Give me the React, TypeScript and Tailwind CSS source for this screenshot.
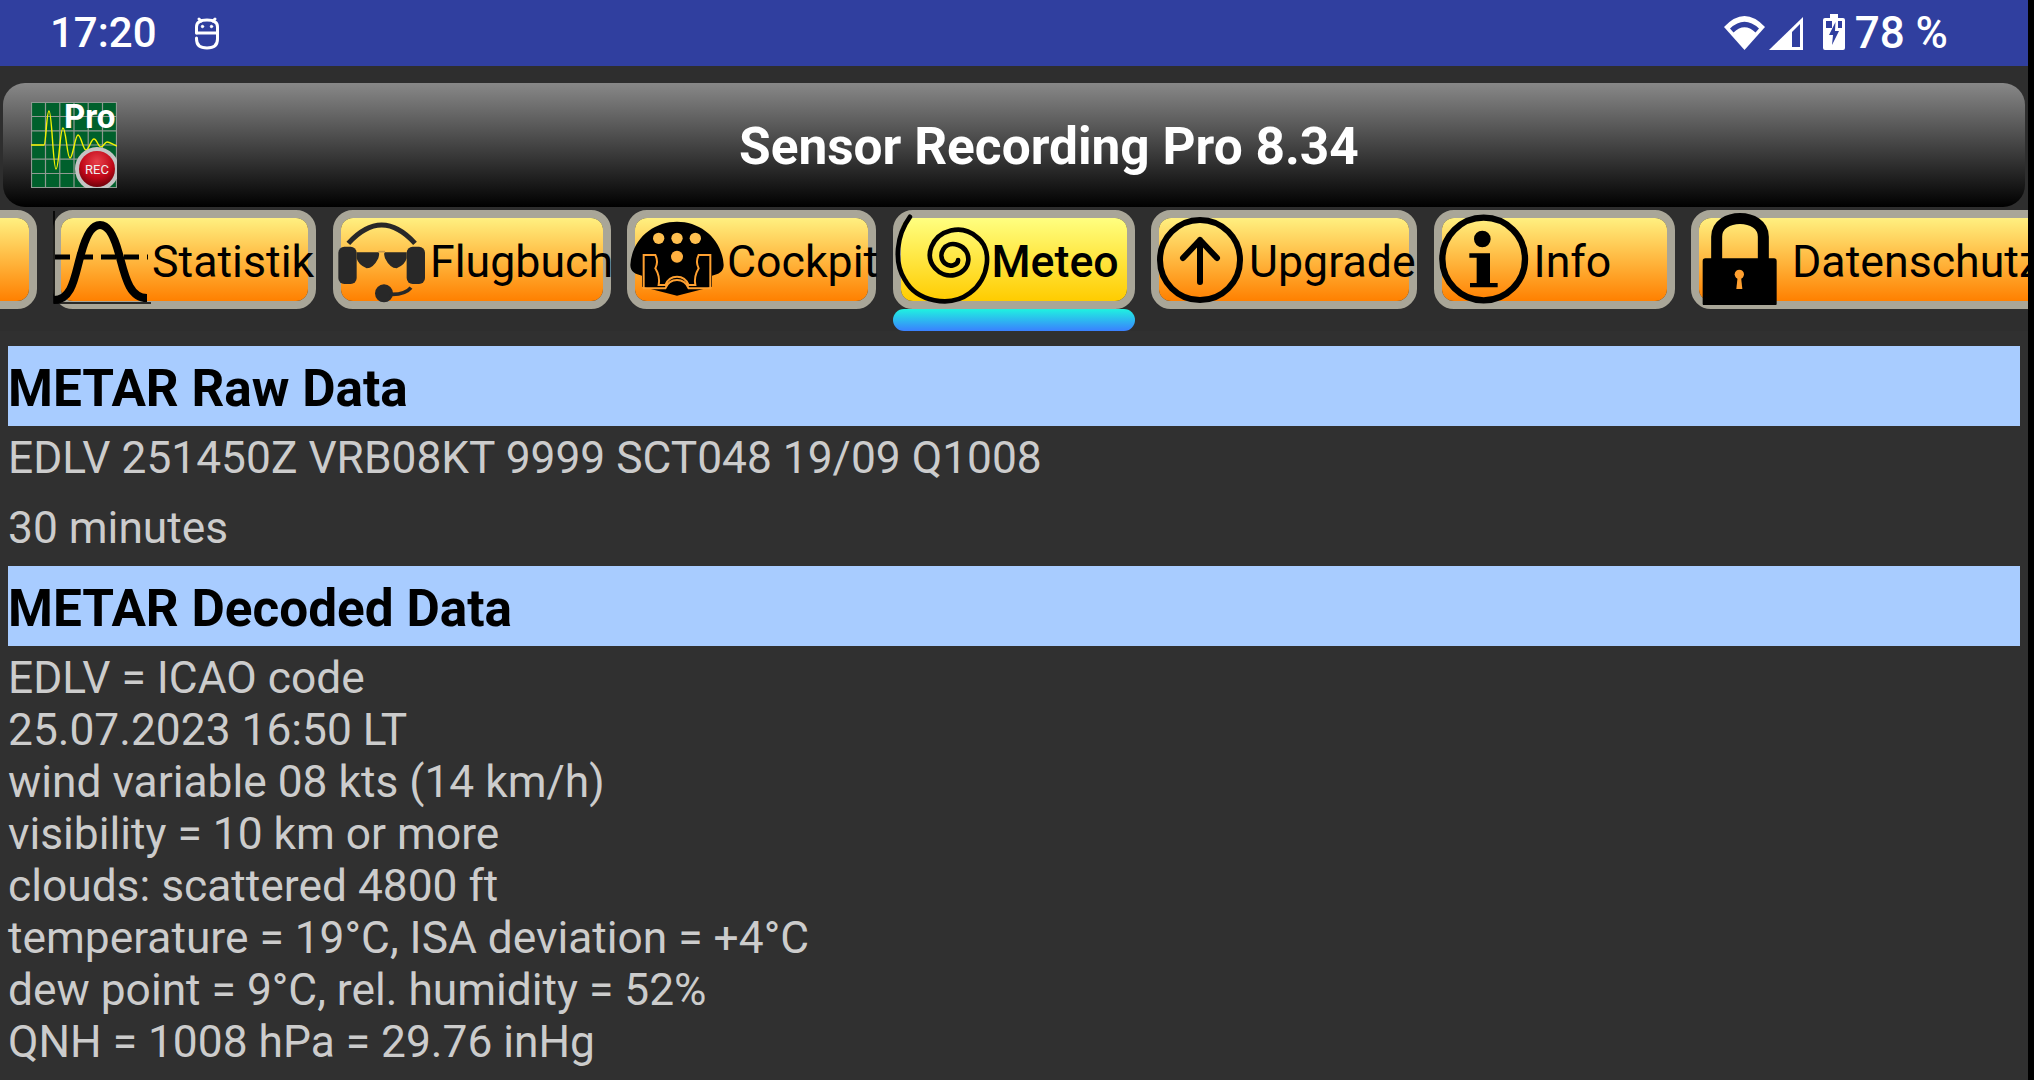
import React from "react";

const StatusIcons = () => (
  <>
    <svg width="41" height="34" viewBox="0 0 41 34" className="shrink-0">
      <path d="M0 11Q20.5-11 41 11L20.5 34Z" fill="#fff" />
      <path d="M6 12.5Q20.5-1 35 12.5L31.5 16.5Q20.5 6 9.5 16.5Z" fill="#303f9f" />
    </svg>
    <svg width="34" height="33" viewBox="0 0 34 33" className="shrink-0 ml-[4px] mt-[1px]">
      <path d="M0 33L34 0V33Z" fill="#fff" />
      <path d="M23 30H31V7L23 15Z" fill="#303f9f" />
    </svg>
    <svg width="22" height="36" viewBox="0 0 22 36" className="shrink-0 ml-[20px] -mt-[2px]">
      <path d="M7 0H15V4H20Q22 4 22 6V34Q22 36 20 36H2Q0 36 0 34V6Q0 4 2 4H7Z" fill="#fff" />
      <path d="M3 7H9V14H3ZM15 7H19V14H15Z" fill="#303f9f" />
      <path d="M12.5 8L6 21H10L9 31L16 17H12Z" fill="#303f9f" />
    </svg>
  </>
);

const RobotIcon = () => (
  <svg width="26" height="34" viewBox="0 0 26 34" className="shrink-0" fill="none" stroke="#fff" strokeWidth="3" strokeLinecap="round">
    <path d="M5 3L7 5M21 3L19 5" />
    <path d="M2.5 17V11Q2.5 4 13 4Q23.5 4 23.5 11V23Q23.5 32 13 32Q2.5 32 2.5 23V22" />
    <path d="M3 17H23" />
    <circle cx="8.5" cy="10.5" r="1.2" fill="#fff" strokeWidth="1" />
    <circle cx="17.5" cy="10.5" r="1.2" fill="#fff" strokeWidth="1" />
  </svg>
);

const Logo = () => (
  <svg width="86" height="86" viewBox="0 0 86 86" className="shrink-0">
    <defs>
      <radialGradient id="recRed" cx="50%" cy="30%" r="75%">
        <stop offset="0%" stopColor="#e8404a" />
        <stop offset="60%" stopColor="#c00818" />
        <stop offset="100%" stopColor="#600008" />
      </radialGradient>
      <clipPath id="logoClip">
        <rect width="86" height="86" />
      </clipPath>
    </defs>
    <g clipPath="url(#logoClip)">
      <rect width="86" height="86" fill="#00602c" />
      <path d="M.5 0V86M14.5 0V86M28.8 0V86M43 0V86M57.2 0V86M71.5 0V86M85.5 0V86M0 .5H86M0 14.5H86M0 28.8H86M0 43H86M0 57.2H86M0 71.5H86M0 85.5H86" stroke="#8f9a92" strokeWidth="1.2" fill="none" />
      <path d="M0 43H13C15 43 15.5 9 18 9C21 9 22 67 25 67C28 67 29 26 32 26C35 26 36 56 39 56C42 56 44 33 47 33C50 33 52 48 55 48C58 48 60 37 63 37C66 37 67 45 70 45C72 45 74 40 76 40C79 40 81 42 86 44" stroke="#f4f400" strokeWidth="1.4" fill="none" />
      <text x="33" y="26" fontFamily="Roboto, sans-serif" fontWeight="700" fontSize="33" fill="#fff">Pro</text>
      <circle cx="66" cy="67" r="22" fill="#c4c4c4" />
      <circle cx="66" cy="67" r="18" fill="url(#recRed)" />
      <text x="66" y="72" textAnchor="middle" fontFamily="Roboto, sans-serif" fontWeight="400" fontSize="13" fill="#f0f0f0">REC</text>
    </g>
  </svg>
);

const StatIcon = () => (
  <svg width="100" height="100" viewBox="0 0 100 100" className="shrink-0 -ml-[10px] -mt-[9px]" fill="none" stroke="#000">
    <path d="M3 6V98H100" strokeWidth="1.6" />
    <path d="M4 52H97" strokeWidth="5" strokeDasharray="15 8" />
    <path d="M3 95C22 95 24 69 30 49C36 27 42 20 49 20C56 20 62 27 68 49C74 71 78 93 96 93" strokeWidth="8" />
  </svg>
);

const HeadsetIcon = () => (
  <svg width="100" height="100" viewBox="0 0 300 300" className="shrink-0 -ml-[10.5px] -mt-[9px]">
    <path d="M55 115Q155 5 255 115" fill="none" stroke="#282828" strokeWidth="15" />
    <rect x="25" y="125" width="55" height="112" rx="18" fill="#282828" />
    <rect x="230" y="125" width="55" height="112" rx="18" fill="#282828" />
    <path d="M80 142H145Q150 142 145 160Q130 190 110 190Q85 180 80 160ZM230 142H165Q160 142 165 160Q180 190 200 190Q225 180 230 160Z" fill="#282828" />
    <path d="M145 140H165" stroke="#c89848" strokeWidth="5" />
    <circle cx="162" cy="265" r="27" fill="#282828" />
    <path d="M180 268Q225 270 243 248" fill="none" stroke="#282828" strokeWidth="11" />
  </svg>
);

const CockpitIcon = () => (
  <svg width="94" height="100" viewBox="0 0 280 300" className="shrink-0 -ml-[5px] -mt-[9px]">
    <path d="M0 180C5 100 70 50 140 50C210 50 275 100 280 180C280 200 265 208 245 212V245L140 272L35 245V212C15 208 0 200 0 180Z" fill="#000" />
    <circle cx="85" cy="100" r="17" fill="#ffc050" />
    <circle cx="140" cy="100" r="17" fill="#ffc050" />
    <circle cx="195" cy="100" r="17" fill="#ffc050" />
    <circle cx="140" cy="155" r="18" fill="#ffb040" />
    <path d="M40 150H75Q85 170 75 190Q90 215 85 240H105Q115 215 140 215Q165 215 175 240H195Q190 215 205 190Q195 170 205 150H240V250H175Q165 225 140 225Q115 225 105 250H40Z" fill="none" stroke="#ffa030" strokeWidth="6" />
  </svg>
);

const SpiralIcon = () => (
  <svg width="113" height="100" viewBox="0 0 340 300" className="shrink-0 -ml-[21px] -mt-[9px]">
    <path d="M90 35C50 90 40 170 75 225C110 290 210 310 270 265C330 220 340 130 290 95C245 55 175 75 155 125C135 175 180 220 225 210C275 200 280 135 235 120C195 105 170 150 195 175C210 188 235 180 235 165" fill="none" stroke="#000" strokeWidth="14" strokeLinecap="round" />
  </svg>
);

const UpgradeIcon = () => (
  <svg width="90" height="90" viewBox="0 0 90 90" className="shrink-0 -ml-[4px]" fill="none" stroke="#000">
    <circle cx="45" cy="45" r="40" strokeWidth="6" />
    <path d="M45 25V67M28 43L45 25L62 43" strokeWidth="6" strokeLinecap="round" strokeLinejoin="round" />
  </svg>
);

const InfoIcon = () => (
  <svg width="100" height="100" viewBox="0 0 300 300" className="shrink-0 -ml-[12px] -mt-[9px]">
    <ellipse cx="161" cy="162" rx="124" ry="124" fill="none" stroke="#000" strokeWidth="19" />
    <circle cx="157" cy="102" r="25" fill="#000" />
    <path d="M118 145H180V234H203V247H120V234H140V158H118Z" fill="#000" />
  </svg>
);

const LockIcon = () => (
  <svg width="100" height="100" viewBox="0 0 300 300" className="shrink-0 -ml-[4px] -mt-[9px]">
    <path d="M65 170V95C65 22 205 22 205 95V170" fill="none" stroke="#000" strokeWidth="33" />
    <rect x="23" y="160" width="222" height="143" rx="8" fill="#000" />
    <circle cx="133" cy="208" r="14" fill="#ffa030" />
    <path d="M128 215H138L142 252H124Z" fill="#ffa030" />
  </svg>
);

type Tab = { label: string; w: string; gapClass: string; icon?: React.ReactNode; active?: boolean };

const tabs: Tab[] = [
  { label: "", w: "w-[200px]", gapClass: "" },
  { label: "Statistik", w: "w-[263px]", gapClass: "ml-[1px]", icon: <StatIcon /> },
  { label: "Flugbuch", w: "w-[278px]", gapClass: "ml-[0px]", icon: <HeadsetIcon /> },
  { label: "Cockpit", w: "w-[249px]", gapClass: "ml-[3px]", icon: <CockpitIcon /> },
  { label: "Meteo", w: "w-[242px]", gapClass: "-ml-[1px]", icon: <SpiralIcon />, active: true },
  { label: "Upgrade", w: "w-[266px]", gapClass: "ml-[4px]", icon: <UpgradeIcon /> },
  { label: "Info", w: "w-[241px]", gapClass: "ml-[4px]", icon: <InfoIcon /> },
  { label: "Datenschutz", w: "w-[360px]", gapClass: "-ml-[3px]", icon: <LockIcon /> },
];

const TabButton = ({ t }: { t: Tab }) => (
  <div className={`${t.w} shrink-0 flex flex-col`}>
    <div className="h-[99px] rounded-[20px] border-[8px] border-[#a9a698] overflow-visible">
      <div
        className={`h-full flex items-center rounded-[12px] bg-linear-to-b/srgb ${
          t.active ? "from-[#ffff80] to-[#ffcc00]" : "from-[#fff080] to-[#ff8000]"
        }`}
      >
        {t.icon}
        <span className={`${t.gapClass} mt-[5px] whitespace-nowrap text-[44.7px] leading-none text-black ${t.active ? "font-medium" : "font-normal"}`}>
          {t.label}
        </span>
      </div>
    </div>
    {t.active && <div className="h-[22px] rounded-[11px] bg-linear-to-b/srgb from-[#1ff2e0] to-[#3a80ff]" />}
  </div>
);

const Heading = ({ children }: { children: React.ReactNode }) => (
  <div className="h-[80px] flex items-center pt-[5px] bg-[#a8ccff] text-black font-bold text-[51.3px] leading-none">{children}</div>
);

const decoded = [
  "EDLV = ICAO code",
  "25.07.2023 16:50 LT",
  "wind variable 08 kts (14 km/h)",
  "visibility = 10 km or more",
  "clouds: scattered 4800 ft",
  "temperature = 19°C, ISA deviation = +4°C",
  "dew point = 9°C, rel. humidity = 52%",
  "QNH = 1008 hPa = 29.76 inHg",
];

export default function App() {
  return (
    <div className="w-[2034px] h-[1080px] bg-black overflow-hidden font-[Roboto,sans-serif]">
      <div className="w-[2028px] h-full bg-[#303030] overflow-hidden flex flex-col">
        <div className="h-[66px] shrink-0 bg-[#303f9f] flex items-center text-white text-[42px] leading-none">
          <span className="ml-[50px] w-[105px] font-medium">17:20</span>
          <div className="ml-[39px]">
            <RobotIcon />
          </div>
          <div className="ml-auto flex items-center mr-[80px]">
            <StatusIcons />
            <span className="ml-[10px] whitespace-nowrap text-[44px] font-medium">78 %</span>
          </div>
        </div>

        <div className="shrink-0 bg-[#2e2e2e] pt-[17px] h-[265px] overflow-hidden flex flex-col">
          <div className="ml-[3px] w-[2022px] h-[124px] shrink-0 rounded-[22px] bg-linear-to-b/srgb from-[#888888] to-black flex items-center">
            <div className="ml-[28px]">
              <Logo />
            </div>
            <span className="ml-[622px] mt-[4px] text-white font-bold text-[51.4px] leading-none whitespace-nowrap">
              Sensor Recording Pro 8.34
            </span>
          </div>
          <div className="mt-[3px] flex items-start gap-[16.5px] -ml-[163.5px]">
            {tabs.map((t, i) => (
              <TabButton key={i} t={t} />
            ))}
          </div>
        </div>

        <div className="px-[8px] pt-[15px] bg-[#303030] text-[#cccccc] text-[44.3px] leading-[52px]">
          <Heading>METAR Raw Data</Heading>
          <p className="mt-[6px] whitespace-nowrap">EDLV 251450Z VRB08KT 9999 SCT048 19/09 Q1008</p>
          <p className="mt-[18px] mb-[12px]">30 minutes</p>
          <Heading>METAR Decoded Data</Heading>
          <div className="mt-[6px]">
            {decoded.map((l) => (
              <p key={l} className="whitespace-nowrap">
                {l}
              </p>
            ))}
          </div>
        </div>
      </div>
    </div>
  );
}
